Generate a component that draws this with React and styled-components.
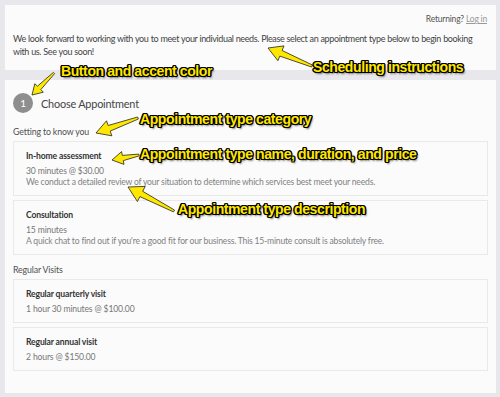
import React from 'react';
import styled, { createGlobalStyle } from 'styled-components';

const GlobalStyle = createGlobalStyle`
  html, body {
    margin: 0;
    padding: 0;
    background: #e8e8ec;
  }
  body {
    font-family: Lato, "Liberation Sans", sans-serif;
  }
`;

const Page = styled.div`
  position: relative;
  width: 500px;
  height: 397px;
  box-sizing: border-box;
  padding: 5px 4px 4px 5px;
  display: flex;
  flex-direction: column;
  gap: 10px;
  overflow: hidden;
`;

const Panel = styled.div`
  background: #fbfbfb;
  box-sizing: border-box;
  padding: ${(p) => p.$pad};
`;

const Returning = styled.div`
  text-align: right;
  font-size: 8.5px;
  line-height: 12px;
  letter-spacing: -0.2px;
  color: #555;
  a {
    color: #999;
    text-decoration: underline;
  }
`;

const Intro = styled.p`
  margin: 7px 0 0;
  font-size: 9px;
  line-height: 13px;
  letter-spacing: -0.38px;
  word-spacing: 0.3px;
  color: #444;
`;

const Heading = styled.div`
  display: flex;
  align-items: center;
  gap: 8px;
  height: 20px;
  font-size: 10.9px;
  letter-spacing: -0.2px;
  color: #444;
`;

const StepBadge = styled.span`
  width: 20px;
  height: 20px;
  border-radius: 50%;
  background: #8e8e8e;
  color: #fff;
  font-size: 10px;
  display: flex;
  align-items: center;
  justify-content: center;
`;

const Category = styled.div`
  margin: ${(p) => (p.$first ? '13px' : '9px')} 0 3px;
  font-size: 8.8px;
  line-height: 12px;
  letter-spacing: -0.15px;
  color: #505050;
`;

const Cards = styled.div`
  display: flex;
  flex-direction: column;
  gap: 4px;
`;

const Card = styled.div`
  border: 1px solid #e9e9e9;
  background: #fbfbfb;
  padding: 8px 12px 7px;
`;

const CardTitle = styled.div`
  font-size: 8.6px;
  font-weight: 700;
  line-height: 12px;
  letter-spacing: -0.15px;
  color: #333;
  margin-bottom: 3px;
`;

const CardMeta = styled.div`
  font-size: 8.6px;
  line-height: 12px;
  letter-spacing: -0.15px;
  color: #777;
`;

const CardDesc = styled.div`
  font-size: 8.6px;
  line-height: 11px;
  letter-spacing: -0.2px;
  color: #828282;
`;

const Note = styled.div`
  position: absolute;
  left: ${(p) => p.$x}px;
  top: ${(p) => p.$y}px;
  font-family: "Liberation Sans", Arial, sans-serif;
  font-weight: 700;
  font-size: 14px;
  line-height: 16px;
  letter-spacing: -0.4px;
  white-space: nowrap;
  color: #ffe800;
  text-shadow:
    -1px -1px 0 #000, 1px -1px 0 #000, -1px 1px 0 #000, 1px 1px 0 #000,
    0 -1.4px 0 #000, 0 1.4px 0 #000, -1.4px 0 0 #000, 1.4px 0 0 #000,
    1.5px 2px 2px rgba(0, 0, 0, 0.6);
`;

const Overlay = styled.svg`
  position: absolute;
  left: 0;
  top: 0;
  pointer-events: none;
`;

const arrowPoints = (x1, y1, x2, y2, shaft, head, headLen) => {
  const dx = x2 - x1;
  const dy = y2 - y1;
  const len = Math.hypot(dx, dy);
  const ux = dx / len;
  const uy = dy / len;
  const nx = -uy;
  const ny = ux;
  const bx = x2 - ux * headLen;
  const by = y2 - uy * headLen;
  const pts = [
    [x1 + nx * shaft * 0.35, y1 + ny * shaft * 0.35],
    [bx + nx * shaft, by + ny * shaft],
    [bx + nx * head, by + ny * head],
    [x2, y2],
    [bx - nx * head, by - ny * head],
    [bx - nx * shaft, by - ny * shaft],
    [x1 - nx * shaft * 0.35, y1 - ny * shaft * 0.35],
  ];
  return pts.map((p) => p.map((v) => v.toFixed(1)).join(',')).join(' ');
};

const arrows = [
  [54, 73, 32, 95, 2.4, 6, 10],
  [312, 66, 268, 48, 3, 8, 14],
  [138, 118, 96, 133, 3, 8, 14],
  [139, 155, 112, 160, 2.6, 6.5, 11],
  [174, 211, 128, 187, 3, 8.5, 15],
];

const notes = [
  { x: 61, y: 63, text: 'Button and accent color' },
  { x: 313, y: 59, text: 'Scheduling instructions' },
  { x: 140, y: 111, text: 'Appointment type category' },
  { x: 140, y: 146, text: 'Appointment type name, duration, and price' },
  { x: 178, y: 201, text: 'Appointment type description' },
];

const groups = [
  {
    name: 'Getting to know you',
    items: [
      {
        title: 'In-home assessment',
        meta: '30 minutes @ $30.00',
        desc: 'We conduct a detailed review of your situation to determine which services best meet your needs.',
      },
      {
        title: 'Consultation',
        meta: '15 minutes',
        desc: "A quick chat to find out if you're a good fit for our business. This 15-minute consult is absolutely free.",
      },
    ],
  },
  {
    name: 'Regular Visits',
    items: [
      { title: 'Regular quarterly visit', meta: '1 hour 30 minutes @ $100.00' },
      { title: 'Regular annual visit', meta: '2 hours @ $150.00' },
    ],
  },
];

export default function App() {
  return (
    <Page>
      <GlobalStyle />
      <Panel $pad="8px 9px 12px 8px">
        <Returning>
          Returning? <a href="#">Log in</a>
        </Returning>
        <Intro>
          We look forward to working with you to meet your individual needs. Please select an appointment type below to begin booking with us. See you soon!
        </Intro>
      </Panel>
      <Panel $pad="13px 8px 20px 8px" style={{ flex: 1 }}>
        <Heading>
          <StepBadge>1</StepBadge>
          Choose Appointment
        </Heading>
        {groups.map((g, i) => (
          <div key={g.name}>
            <Category $first={i === 0}>{g.name}</Category>
            <Cards>
              {g.items.map((it) => (
                <Card key={it.title}>
                  <CardTitle>{it.title}</CardTitle>
                  <CardMeta>{it.meta}</CardMeta>
                  {it.desc && <CardDesc>{it.desc}</CardDesc>}
                </Card>
              ))}
            </Cards>
          </div>
        ))}
      </Panel>

      <Overlay width="500" height="397" viewBox="0 0 500 397">
        {arrows.map((a, i) => (
          <polygon
            key={i}
            points={arrowPoints(...a)}
            fill="#ffe800"
            stroke="#222"
            strokeWidth="0.8"
            strokeLinejoin="round"
          />
        ))}
      </Overlay>
      {notes.map((n) => (
        <Note key={n.text} $x={n.x} $y={n.y}>
          {n.text}
        </Note>
      ))}
    </Page>
  );
}
